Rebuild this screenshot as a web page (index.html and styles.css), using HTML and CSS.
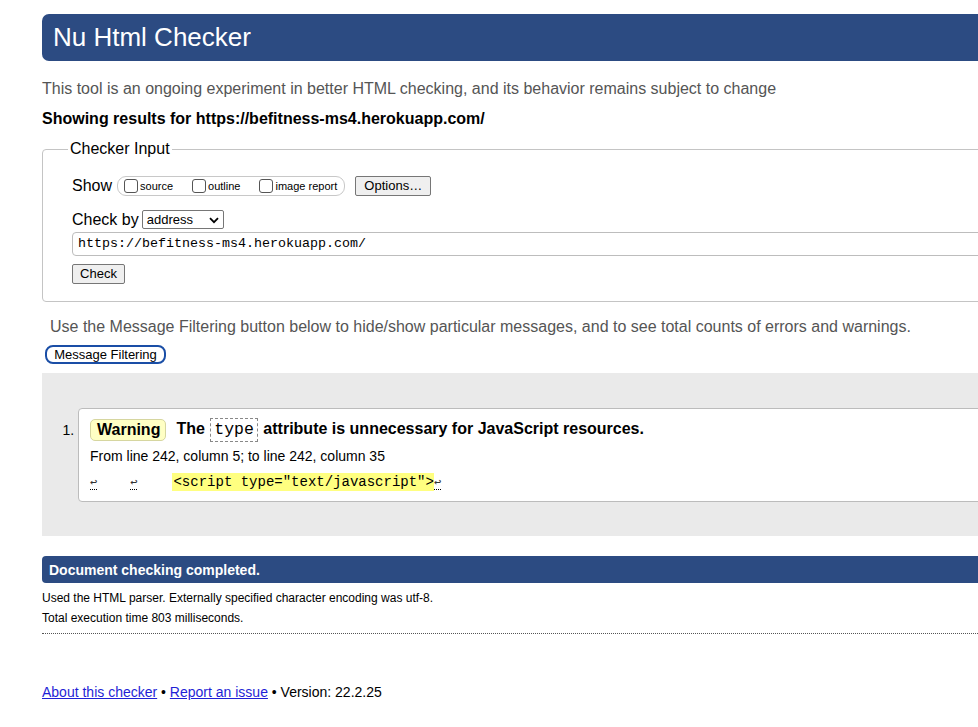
FILE: index.html
```html
<!DOCTYPE html>
<html lang="en">
<head>
<meta charset="utf-8">
<title>Nu Html Checker</title>
<link rel="stylesheet" href="styles.css">
</head>
<body>
<div class="page">
  <h1 class="title">Nu Html Checker</h1>
  <p class="intro">This tool is an ongoing experiment in better HTML checking, and its behavior remains subject to change</p>
  <p class="showing">Showing results for https://befitness-ms4.herokuapp.com/</p>

  <fieldset class="input-box">
    <legend class="legend">Checker Input</legend>
    <div class="row show-row">
      <span class="label">Show</span>
      <span class="opts">
        <label class="opt"><span class="cb"></span>source</label>
        <label class="opt"><span class="cb"></span>outline</label>
        <label class="opt"><span class="cb"></span>image report</label>
      </span>
      <button class="btn options-btn" type="button">Options…</button>
    </div>
    <div class="row checkby-row">
      <span class="label">Check by</span>
      <span class="select">address<svg class="chev" width="10" height="7" viewBox="0 0 10 7"><path d="M1 1.2 L5 5.2 L9 1.2" fill="none" stroke="#000" stroke-width="1.8"/></svg></span>
    </div>
    <div class="url">https://befitness-ms4.herokuapp.com/</div>
    <button class="btn check-btn" type="button">Check</button>
  </fieldset>

  <p class="filter-note">Use the Message Filtering button below to hide/show particular messages, and to see total counts of errors and warnings.</p>
  <button class="filter-btn" type="button">Message Filtering</button>

  <div class="results">
    <ol class="msgs">
      <li class="msg">
        <p class="msg-head"><span class="badge">Warning</span><span class="msg-text">The <code class="attr">type</code> attribute is unnecessary for JavaScript resources.</span></p>
        <p class="loc">From line 242, column 5; to line 242, column 35</p>
        <p class="extract"><span class="lf">↩</span><span class="tab"></span><span class="lf">↩</span><span class="tab tab2"></span><span class="hl">&lt;script type="text/javascript"&gt;</span><span class="lf">↩</span></p>
      </li>
    </ol>
  </div>

  <p class="done">Document checking completed.</p>
  <p class="small">Used the HTML parser. Externally specified character encoding was utf-8.</p>
  <p class="small last">Total execution time 803 milliseconds.</p>

  <p class="footer"><a href="#">About this checker</a> • <a href="#">Report an issue</a> • Version: 22.2.25</p>
</div>
</body>
</html>
```
FILE: styles.css
```css
html, body {
  margin: 0;
  padding: 0;
  overflow: hidden;
  background: #fff;
}
body {
  font-family: "Liberation Sans", Arial, sans-serif;
  color: #000;
}
.page {
  width: 1200px;
  padding: 14px 0 0 42px;
}
p { margin: 0; }

.title {
  margin: 0;
  height: 47px;
  line-height: 47px;
  background: #2c4b82;
  color: #fff;
  font-weight: normal;
  font-size: 26px;
  padding-left: 11px;
  border-radius: 7px 0 0 7px;
}
.intro {
  margin-top: 19px;
  line-height: 18px;
  font-size: 16px;
  color: #555;
}
.showing {
  margin-top: 12px;
  line-height: 18px;
  font-size: 16px;
  font-weight: bold;
}

.input-box {
  margin: 12px 0 0 0;
  border: 1px solid #c4c4c4;
  border-radius: 4px 0 0 4px;
  padding: 18px 0 17px 29px;
}
.legend {
  font-size: 16px;
  line-height: 18px;
  padding: 0 2px;
  margin-left: -4px;
}
.row {
  display: flex;
  align-items: center;
}
.label {
  font-size: 16px;
  line-height: 20px;
}
.show-row { height: 20px; }
.opts {
  display: flex;
  align-items: center;
  height: 18px;
  margin-left: 5px;
  border: 1px solid #c8c8c8;
  border-radius: 9px;
  padding: 0 7px 0 6px;
}
.opt {
  display: flex;
  align-items: center;
  font-size: 11px;
  margin-right: 19px;
}
.opt:last-child { margin-right: 0; }
.cb {
  width: 12px;
  height: 12px;
  border: 1px solid #555;
  border-radius: 3px;
  margin-right: 2px;
  background: #fff;
}
.btn {
  font-family: "Liberation Sans", Arial, sans-serif;
  font-size: 13px;
  background: #efefef;
  border: 1px solid #767676;
  border-radius: 2px;
  color: #000;
  padding: 0 7px;
  height: 20px;
  line-height: 18px;
}
.options-btn {
  margin-left: 10px;
  width: 76px;
}
.checkby-row {
  margin-top: 14px;
  height: 19px;
}
.select {
  display: flex;
  align-items: center;
  justify-content: space-between;
  margin-left: 3px;
  width: 72px;
  height: 17px;
  border: 1px solid #767676;
  border-radius: 2px;
  padding: 0 4px;
  font-size: 13px;
  line-height: 17px;
}
.chev { margin-top: 1px; }
.url {
  margin-top: 3px;
  height: 22px;
  line-height: 22px;
  border: 1px solid #bdbdbd;
  border-radius: 4px 0 0 4px;
  padding-left: 5px;
  font-family: "Liberation Mono", "DejaVu Sans Mono", monospace;
  font-size: 13.33px;
}
.check-btn {
  display: block;
  margin-top: 8px;
  width: 53px;
  padding: 0;
}

.filter-note {
  margin: 16px 0 0 8px;
  font-size: 16px;
  line-height: 18px;
  color: #555;
}
.filter-btn {
  display: block;
  margin: 9px 0 0 3px;
  height: 19px;
  width: 121px;
  padding: 0;
  font-family: "Liberation Sans", Arial, sans-serif;
  font-size: 13px;
  line-height: 15px;
  background: #fff;
  color: #000;
  border: 2px solid #1a4ea6;
  border-radius: 8px;
}

.results {
  margin-top: 9px;
  background: #eaeaea;
  padding: 35px 0 34px 36px;
}
.msgs {
  margin: 0;
  padding: 0;
}
.msg {
  list-style: decimal;
  font-size: 14px;
  background: #fff;
  border: 1px solid #bcbcbc;
  border-radius: 4px 0 0 4px;
  padding: 10px 0 10px 11px;
}
.msg::marker {
  font-size: 14px;
}
.msg-head {
  display: flex;
  align-items: center;
  height: 22px;
}
.badge {
  display: inline-block;
  background: #ffffc4;
  border: 1px solid #d6d6a0;
  border-radius: 5px;
  padding: 0 5px 0 6px;
  height: 20px;
  line-height: 20px;
  font-size: 16px;
  font-weight: bold;
}
.msg-text {
  margin-left: 10px;
  font-size: 16px;
  font-weight: bold;
}
.attr {
  display: inline-block;
  font-family: "Liberation Mono", "DejaVu Sans Mono", monospace;
  font-weight: normal;
  font-size: 16.5px;
  border: 1px dashed #888;
  padding: 0 3px;
  margin: 0 1px;
  line-height: 22px;
  vertical-align: middle;
}
.loc {
  margin-top: 7px;
  line-height: 17px;
  font-size: 14px;
}
.extract {
  margin-top: 8px;
  display: flex;
  align-items: center;
  line-height: 18px;
  font-family: "Liberation Mono", "DejaVu Sans Mono", monospace;
  font-size: 14px;
}
.lf {
  font-size: 12px;
  line-height: 12px;
  color: #333;
  border-bottom: 1px dotted #000;
  margin-top: 3px;
}
.tab {
  display: inline-block;
  width: 33px;
}
.tab2 { width: 35px; }
.hl {
  background: #ffff80;
  padding: 0 0 0 1px;
  line-height: 18px;
}

.done {
  margin-top: 20px;
  background: #2c4b82;
  color: #fff;
  font-weight: bold;
  font-size: 14px;
  height: 27px;
  line-height: 28px;
  padding-left: 7px;
  border-radius: 4px 0 0 4px;
}
.small {
  font-size: 12px;
  line-height: 14px;
  margin-top: 6px;
}
.done + .small { margin-top: 8px; }
.small.last {
  padding-bottom: 8px;
  border-bottom: 1px dotted #555;
}
.footer {
  margin-top: 50px;
  font-size: 14px;
  line-height: 16px;
}
.footer a {
  color: #1f1fd6;
  text-decoration: underline;
}
```
